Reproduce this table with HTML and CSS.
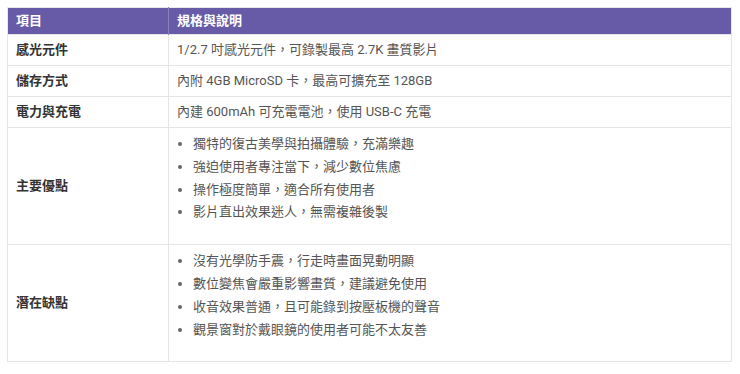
FILE: index.html
```html
<!DOCTYPE html>
<html lang="zh-Hant">
<head>
<meta charset="utf-8">
<link rel="stylesheet" href="styles.css">
</head>
<body>
<table class="spec">
  <thead>
    <tr><th class="c1">項目</th><th>規格與說明</th></tr>
  </thead>
  <tbody>
    <tr><td class="c1">感光元件</td><td>1/2.7 吋感光元件，可錄製最高 2.7K 畫質影片</td></tr>
    <tr><td class="c1">儲存方式</td><td>內附 4GB MicroSD 卡，最高可擴充至 128GB</td></tr>
    <tr><td class="c1">電力與充電</td><td>內建 600mAh 可充電電池，使用 USB-C 充電</td></tr>
    <tr><td class="c1">主要優點</td><td>
      <ul>
        <li>獨特的復古美學與拍攝體驗，充滿樂趣</li>
        <li>強迫使用者專注當下，減少數位焦慮</li>
        <li>操作極度簡單，適合所有使用者</li>
        <li>影片直出效果迷人，無需複雜後製</li>
      </ul>
    </td></tr>
    <tr><td class="c1">潛在缺點</td><td>
      <ul>
        <li>沒有光學防手震，行走時畫面晃動明顯</li>
        <li>數位變焦會嚴重影響畫質，建議避免使用</li>
        <li>收音效果普通，且可能錄到按壓板機的聲音</li>
        <li>觀景窗對於戴眼鏡的使用者可能不太友善</li>
      </ul>
    </td></tr>
  </tbody>
</table>
</body>
</html>
```
FILE: styles.css
```css
html, body {
  background: #ffffff;
}
body {
  margin: 7px 8px 0 7px;
  font-family: Roboto, "Noto Sans CJK TC", sans-serif;
  font-size: 13px;
  color: #555555;
}
.spec {
  width: 725px;
  border-collapse: collapse;
  border: 1px solid #e8e8e8;
}
.spec th {
  background: #675ba8;
  color: #ffffff;
  font-weight: 700;
  text-align: left;
  padding: 3px 8px;
  line-height: 20px;
  border-right: 1px solid #8a80bd;
}
.spec th:last-child {
  border-right: none;
}
.spec td {
  padding: 5px 8px;
  line-height: 20px;
  border: 1px solid #e5e5e5;
  vertical-align: middle;
}
.spec .c1 {
  width: 144px;
}
.spec td.c1 {
  font-weight: 700;
  color: #333333;
}
.spec ul {
  margin: 1px 0 16px 0;
  padding-left: 16px;
}
.spec li {
  line-height: 20.8px;
  margin-bottom: 2px;
}
.spec li::marker {
  color: #666666;
}
```
